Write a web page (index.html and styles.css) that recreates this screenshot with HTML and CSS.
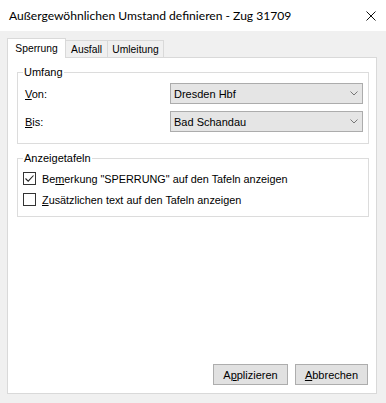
FILE: index.html
```html
<!DOCTYPE html>
<html lang="de">
<head>
<meta charset="utf-8">
<title>Außergewöhnlichen Umstand definieren</title>
<link rel="stylesheet" href="styles.css">
</head>
<body>
<div class="window">
  <div class="titlebar">
    <span class="title">Außergewöhnlichen Umstand definieren - Zug 31709</span>
    <svg class="close" width="10" height="10" viewBox="0 0 10 10"><path d="M0.5 0.5 L9.5 9.5 M9.5 0.5 L0.5 9.5" stroke="#111" stroke-width="1" fill="none"/></svg>
  </div>
  <div class="content">
    <div class="tabs">
      <div class="tab active">Sperrung</div>
      <div class="tab tab-ausfall">Ausfall</div>
      <div class="tab tab-umleitung">Umleitung</div>
    </div>
    <div class="panel">
      <fieldset class="group group-umfang">
        <legend>Umfang</legend>
        <div class="row">
          <span class="lbl"><u>V</u>on:</span>
          <div class="combo"><span>Dresden Hbf</span><svg class="chev" width="8" height="5" viewBox="0 0 8 5"><path d="M0.5 0.5 L4 4 L7.5 0.5" stroke="#777" stroke-width="1" fill="none"/></svg></div>
        </div>
        <div class="row">
          <span class="lbl"><u>B</u>is:</span>
          <div class="combo"><span>Bad Schandau</span><svg class="chev" width="8" height="5" viewBox="0 0 8 5"><path d="M0.5 0.5 L4 4 L7.5 0.5" stroke="#777" stroke-width="1" fill="none"/></svg></div>
        </div>
      </fieldset>
      <fieldset class="group group-tafeln">
        <legend>Anzeigetafeln</legend>
        <div class="check">
          <span class="box"><svg width="11" height="11" viewBox="0 0 11 11"><path d="M1.5 5.5 L4.2 8.2 L9.5 2.5" stroke="#222" stroke-width="1.1" fill="none"/></svg></span>
          <span>Be<u>m</u>erkung "SPERRUNG" auf den Tafeln anzeigen</span>
        </div>
        <div class="check">
          <span class="box"></span>
          <span><u>Z</u>usätzlichen text auf den Tafeln anzeigen</span>
        </div>
      </fieldset>
      <div class="buttons">
        <button class="btn btn-apply">A<u>p</u>plizieren</button>
        <button class="btn btn-cancel"><u>A</u>bbrechen</button>
      </div>
    </div>
  </div>
</div>
</body>
</html>
```
FILE: styles.css
```css
html, body {
  margin: 0;
  padding: 0;
}
body {
  width: 386px;
  height: 403px;
  overflow: hidden;
  background: #f0f0f0;
  font-family: "Liberation Sans", Arial, sans-serif;
  font-size: 11px;
  color: #000;
}
.window {
  display: flex;
  flex-direction: column;
  height: 403px;
}
.titlebar {
  height: 31px;
  background: #fff;
  display: flex;
  align-items: center;
  padding: 0 10px 0 9px;
  box-sizing: border-box;
  flex: none;
}
.title {
  font-family: Lato, "Noto Sans", sans-serif;
  font-size: 12.1px;
  flex: 1;
  padding-bottom: 1px;
}
.close {
  display: block;
  margin-top: 1px;
}
.content {
  flex: 1;
  display: flex;
  flex-direction: column;
  padding: 7px 9px 9px 7px;
  min-height: 0;
}
.tabs {
  height: 19px;
  display: flex;
  align-items: flex-end;
  flex: none;
}
.tab {
  box-sizing: border-box;
  height: 17px;
  background: #f0f0f0;
  border-top: 1px solid #d9d9d9;
  border-right: 1px solid #d9d9d9;
  font-size: 10.3px;
  display: flex;
  align-items: center;
  justify-content: center;
}
.tab.active {
  height: 20px;
  margin-bottom: -1px;
  background: #fff;
  border-left: 1px solid #d9d9d9;
  width: 59px;
  position: relative;
  z-index: 1;
  padding-bottom: 1px;
}
.tab-ausfall { width: 42px; }
.tab-umleitung { width: 56px; }
.panel {
  flex: 1;
  background: #fff;
  border: 1px solid #d9d9d9;
  display: flex;
  flex-direction: column;
  padding: 8px 7px 0 9px;
  min-height: 0;
}
.group {
  margin: 0;
  border: 1px solid #dcdcdc;
  padding: 0;
  min-width: 0;
}
.group legend {
  padding: 0 1px;
  margin-left: -2px;
  line-height: 13px;
  font-size: 11px;
}
.group-umfang {
  padding: 4px 5px 11px 7px;
  display: flex;
  flex-direction: column;
  gap: 7px;
}
.row {
  display: flex;
  align-items: center;
  height: 21px;
}
.lbl {
  flex: 1;
}
.combo {
  box-sizing: border-box;
  width: 193px;
  height: 21px;
  background: #e5e5e5;
  border: 1px solid #acacac;
  display: flex;
  align-items: center;
  padding: 0 4px 0 3px;
}
.combo span {
  flex: 1;
}
.chev {
  display: block;
}
.group-tafeln {
  margin-top: 8px;
  padding: 7px 5px 10px 5px;
  display: flex;
  flex-direction: column;
  gap: 8px;
}
.group-tafeln legend {
  margin-left: 0;
}
.check {
  display: flex;
  align-items: center;
  height: 13px;
  gap: 6px;
  font-size: 10.85px;
}
.box {
  box-sizing: border-box;
  width: 13px;
  height: 13px;
  border: 1px solid #333;
  background: #fff;
  display: flex;
  align-items: center;
  justify-content: center;
  flex: none;
}
.box svg {
  display: block;
}
.buttons {
  margin-top: auto;
  margin-bottom: 8px;
  display: flex;
  justify-content: flex-end;
  gap: 7px;
  padding-right: 1px;
}
.btn {
  box-sizing: border-box;
  height: 21px;
  background: #e1e1e1;
  border: 1px solid #adadad;
  font-family: "Liberation Sans", Arial, sans-serif;
  font-size: 11px;
  color: #000;
  padding: 0;
  margin: 0;
}
.btn-apply { width: 75px; }
.btn-cancel { width: 73px; }
```
